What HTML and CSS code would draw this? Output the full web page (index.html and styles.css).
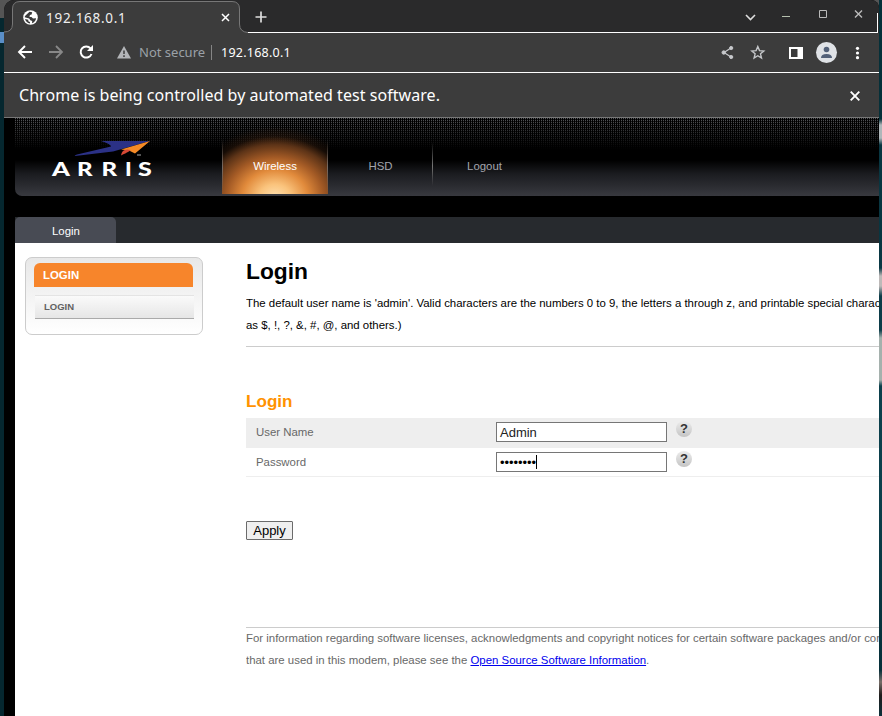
FILE: index.html
```html
<!DOCTYPE html>
<html lang="en">
<head>
<meta charset="utf-8">
<title>192.168.0.1</title>
<link rel="stylesheet" href="styles.css">
</head>
<body>
<div class="window">
  <div class="tabstrip">
    <svg class="tab-shape" width="250" height="33" viewBox="0 0 250 33"><path d="M0 33V32Q8.500 32 8.500 24V9Q8.500 1.500 16 1.500H228Q235.500 1.500 235.500 9V24Q235.500 32 244 32.500V33Z" fill="#3c3c3c"/><path d="M0 32Q8.500 32 8.500 24V9Q8.500 1.500 16 1.500H228Q235.500 1.500 235.500 9V24Q235.500 32 244 32.500" fill="none" stroke="#777"/></svg>
    <div class="tab">
      <svg width="15" height="15" viewBox="0 0 15 15"><circle cx="7.500" cy="7.500" r="7.300" fill="#fff"/><path d="M6.500 1.700L9.200 2.300 8.600 4.400 6.900 5.100 6.500 7H8.500L10 8.500 13.100 8.300Q12.500 12 9 13.200L9.200 11 7.300 10.300 6.200 8.400 1.700 7.300 2 6.100Z" fill="#3c3c3c"/><path d="M2 9L5.300 9.700V11.200L7 12V13.500Q3.200 12.900 2 9Z" fill="#3c3c3c"/></svg>
      <span class="tab-title">192.168.0.1</span>
      <svg class="tab-close" width="9" height="9" viewBox="0 0 9 9"><path d="M1 1L8 8M8 1L1 8" stroke="#fff" stroke-width="1.500"/></svg>
    </div>
    <svg class="plus" width="12" height="12" viewBox="0 0 12 12"><path d="M6 .5V11.500M.5 6H11.500" stroke="#dedede" stroke-width="1.700"/></svg>
    <svg class="controls" width="120" height="16" viewBox="0 0 120 16"><path d="M2 8L6.500 12.500 11 8" fill="none" stroke="#ddd" stroke-width="1.600"/><path d="M38 9.500H46" stroke="#b5c0ae" stroke-width="1.200"/><path d="M75.500 3.500H82.500V10.500H75.500Z" fill="none" stroke="#bbb"/><path d="M111 3.500L118 10.500M118 3.500L111 10.500" stroke="#bbb" stroke-width="1.400"/></svg>
  </div>
  <div class="toolbar">
    <svg class="nav-icons" width="80" height="20" viewBox="0 0 80 20"><path d="M15 10H2.500M8 4L2 10 8 16" fill="none" stroke="#fff" stroke-width="1.900"/><path d="M32 10H45M39 4L45 10 39 16" fill="none" stroke="#888" stroke-width="1.800"/><path d="M74.500 12A5.600 5.600 0 1 1 73.500 6.300" fill="none" stroke="#fff" stroke-width="2"/><path d="M76 3V9H70Z" fill="#fff"/></svg>
    <svg class="warn" width="14" height="13" viewBox="0 0 14 13"><path d="M7 0L14 12.500H0Z" fill="#b3b5b8"/><path d="M7 4.500V8M7 9.300V11" stroke="#3c3c3c" stroke-width="1.500"/></svg>
    <span class="insecure">Not secure</span>
    <span class="url-bar"></span>
    <span class="url">192.168.0.1</span>
    <svg class="actions" width="144" height="24" viewBox="0 0 144 24"><g fill="#c7c9cc" stroke="#c7c9cc"><circle cx="3.700" cy="12.500" r="1.700"/><circle cx="11.200" cy="8" r="1.600"/><circle cx="11.200" cy="17" r="1.600"/><path d="M11 8L4 12.500 11 17" fill="none" stroke-width="1.200"/></g><path d="M37.800 6.600L39.500 10.600 43.800 11 40.500 13.800 41.500 18 37.800 15.700 34.100 18 35.100 13.800 31.800 11 36.100 10.600Z" fill="none" stroke="#c5c7ca" stroke-width="1.400"/><path d="M70 8H82V18H70Z" fill="none" stroke="#fff" stroke-width="2"/><path d="M77.500 7H83V19H77.500Z" fill="#fff"/><circle cx="106.500" cy="12.500" r="10.500" fill="#dfe2e6"/><circle cx="106.500" cy="9.500" r="2.800" fill="#526078"/><path d="M101 18Q101 14 106.500 14T112 18Z" fill="#526078"/><g fill="#fff"><circle cx="137.500" cy="8.300" r="1.600"/><circle cx="137.500" cy="13" r="1.600"/><circle cx="137.500" cy="17.700" r="1.600"/></g></svg>
  </div>
  <div class="infobar">
    <span class="info-text">Chrome is being controlled by automated test software.</span>
    <svg class="info-close" width="10" height="10" viewBox="0 0 10 10"><path d="M.7 .7L9.300 9.300M9.300 .7L.7 9.300" stroke="#fff" stroke-width="1.900"/></svg>
  </div>
  <div class="page">
    <header class="masthead">
      <svg class="logo" width="104" height="42" viewBox="0 0 104 42"><path d="M50 3H99L62 13.500 24 18Q23 17.500 26 16.500L60 8.500Q60 6 50 3Z" fill="#2b3186"/><path d="M99 3L84 15.500 78 12.500 70 11.500Z" fill="#f58a26"/><path d="M70 17.500Q71 9.500 80 12L77 14Q75 15 70 17.500Z" fill="#d84a35"/><path d="M86 17H90" stroke="#aaa"/><g class="wordmark"><text transform="translate(1 37.500) scale(1.380 1)">A</text><text transform="translate(26 37.500) scale(1.300 1)">R</text><text transform="translate(50.500 37.500) scale(1.300 1)">R</text><text transform="translate(74 37.500) scale(1.200 1)">I</text><text transform="translate(87 37.500) scale(1.350 1)">S</text></g></svg>
      <nav class="menu">
        <a class="item active">Wireless</a><a class="item">HSD</a><a class="item last">Logout</a>
      </nav>
    </header>
    <div class="subnav"><a class="subtab">Login</a></div>
    <div class="content">
      <aside class="sidebar">
        <div class="side-head">LOGIN</div>
        <div class="side-item">LOGIN</div>
      </aside>
      <main class="main">
        <h1>Login</h1>
        <p class="intro">The default user name is 'admin'. Valid characters are the numbers 0 to 9, the letters a through z, and printable special charac<br>as $, !, ?, &amp;, #, @, and others.)</p>
        <h2>Login</h2>
        <div class="row shaded"><label class="label">User Name</label><div class="field">Admin</div><span class="help">?</span></div>
        <div class="row"><label class="label">Password</label><div class="field"><span class="dots">••••••••</span><span class="caret"></span></div><span class="help">?</span></div>
        <button class="apply">Apply</button>
        <p class="legal">For information regarding software licenses, acknowledgments and copyright notices for certain software packages and/or cor<br>that are used in this modem, please see the <a class="link">Open Source Software Information</a>.</p>
      </main>
    </div>
  </div>
</div>
<div class="desktop-edge"></div>
</body>
</html>
```
FILE: styles.css
```css
* { box-sizing: border-box; }
body {
  margin: 0;
  width: 882px;
  height: 716px;
  overflow: hidden;
  display: flex;
  padding-left: 4px;
  background: linear-gradient(#555 0 18px, #05272f 18px 32px, #5a8fc8 32px 43px, #05272f 43px);
  font-family: "Liberation Sans", Arial, sans-serif;
  font-size: 11.42px;
}
.window {
  width: 875px;
  height: 716px;
  flex: none;
  overflow: hidden;
  border-radius: 10px 8px 0 0;
  background: #000;
}
.desktop-edge {
  width: 3px;
  height: 716px;
  flex: none;
  background: linear-gradient(#043039 0 119px, #aeb6b9 125px 138px, #083641 145px 240px, #0a3945 268px, #bdb9b8 276px 286px, #0c3d49 296px 330px, #a5b1ad 338px 380px, #0b404c 386px 490px, #062f39 670px, #776d68 682px, #201d1c 695px, #0b303a);
}
.tabstrip {
  height: 33px;
  position: relative;
  background: #2a2a2b;
  display: flex;
  align-items: flex-start;
  background-image: linear-gradient(#fff, #fff), linear-gradient(#fff, #fff);
  background-size: 630px 1px, 1px 20px;
  background-position: 244px 32px, 873px 13px;
  background-repeat: no-repeat;
}
.tab-shape { position: absolute; left: 0; top: 0; }
.tab {
  position: relative;
  width: 236px;
  height: 33px;
  padding: 2px 10px 0 19px;
  display: flex;
  align-items: center;
  flex: none;
}
.tab-title, .insecure, .url, .info-text {
  font-family: "Noto Sans", sans-serif;
  white-space: nowrap;
}
.tab-title { margin-left: 8px; color: #eee; font-size: 13.5px; letter-spacing: .72px; }
.tab-close { margin-left: auto; }
.plus { margin: 11px 0 0 15px; }
.controls { margin: 7px 15px 0 auto; }
.toolbar {
  height: 40px;
  background: #3c3c3c;
  border-bottom: 1px solid #fff;
  padding-bottom: 1px;
  display: flex;
  align-items: center;
}
.nav-icons { margin-left: 13px; }
.warn { margin-left: 20px; }
.insecure { width: 72px; margin-left: 8px; color: #9ba1a7; font-size: 13px; }
.url-bar { width: 1px; height: 15px; background: #858585; }
.url { margin-left: 9px; color: #fff; font-size: 12.5px; letter-spacing: .25px; }
.actions { margin: 0 15px 0 auto; }
.infobar {
  height: 45px;
  background: #3c3c3c;
  border-bottom: 1px solid #777;
  padding: 0 19px 0 15px;
  display: flex;
  align-items: center;
  justify-content: space-between;
  color: #fff;
}
.info-text { font-size: 16px; letter-spacing: .05px; }
.info-close { margin-top: 2px; }
.page { padding-left: 11px; }
.masthead {
  height: 78px;
  display: flex;
  border-radius: 0 0 0 7px;
  background:
    linear-gradient(transparent, #000 31px, transparent 31px),
    repeating-linear-gradient(90deg, transparent 0 1px, #000 1px 2px) 0 0 / 100% 31px no-repeat,
    repeating-linear-gradient(#56575a 0 1px, #151516 1px 2px) 0 0 / 100% 31px no-repeat,
    linear-gradient(#000 42px, #1b1c20 56px, #38393f);
}
.logo { margin: 20px 0 0 36px; flex: none; }
.wordmark { fill: #fff; font: 900 18.500px Lato, sans-serif; }
.menu { display: flex; margin-left: 67px; height: 76px; }
.item {
  width: 105px;
  padding-top: 42px;
  text-align: center;
  color: #a3a5ad;
  background: linear-gradient(transparent 24px, #777 48px, #666 52px, transparent 68px) right / 1px 100% no-repeat;
}
.item.active {
  width: 106px;
  color: #fff;
  background:
    linear-gradient(transparent 20px, #766b64 50px, transparent) left / 1px 100% no-repeat,
    linear-gradient(transparent 20px, #766b64 50px, transparent) right / 1px 100% no-repeat,
    radial-gradient(ellipse 78px 64px at 53px 79px, #ffe0af 0, #fac37c 20%, #e18a3b 42%, #a35a25 62%, #5c3317 82%, rgba(45, 25, 12, .5) 95%, transparent 110%);
}
.item.last { background: none; width: 103px; }
.subnav { height: 26px; margin-top: 21px; background: #272a2e; }
.subtab {
  width: 101px;
  height: 26px;
  display: block;
  padding: 8px 0 0 1px;
  line-height: 13px;
  text-align: center;
  color: #fff;
  background: #484b54;
  border-radius: 5px 5px 0 0;
}
.content { height: 473px; background: #fff; display: flex; padding: 14px 0 0 10px; }
.sidebar {
  width: 178px;
  height: 78px;
  flex: none;
  padding: 5px 8px;
  border: 1px solid #ccc;
  border-radius: 7px;
  background: linear-gradient(#e8e8e8, #fff);
  font-weight: bold;
}
.side-head {
  width: 159px;
  height: 24px;
  padding: 6px 9px;
  line-height: 13px;
  font-size: 11.42px;
  color: #fff;
  background: #f7852b;
  border-radius: 6px 6px 0 0;
}
.side-item {
  height: 24px;
  margin: 8px 0 0 1px;
  padding: 5px 9px;
  line-height: 11px;
  font-size: 9.5px;
  color: #626262;
  border-top: 1px solid #e4e4e4;
  border-bottom: 1px solid #aaa;
  background: linear-gradient(#fafafa, #e6e6e6);
}
.main { margin-left: 43px; width: 633px; flex: none; overflow: hidden; }
h1 { margin: 1px 0 0; font-size: 22.8px; line-height: 27px; color: #000; }
.intro {
  margin: 7px 0 0;
  height: 55px;
  line-height: 22px;
  color: #000;
  white-space: nowrap;
  border-bottom: 1px solid #ccc;
}
h2 { margin: 45px 0 0; font-size: 17.1px; line-height: 20px; color: #ff9200; }
.row {
  height: 29px;
  display: flex;
  align-items: center;
  color: #686868;
  border-bottom: 1px solid #eee;
}
.row.shaded { height: 30px; margin-top: 6px; padding-bottom: 1px; background: #eee; }
.label { width: 250px; padding-left: 10px; }
.field {
  width: 171px;
  height: 20px;
  padding: 0 3px;
  display: flex;
  align-items: center;
  border: 1px solid #767676;
  background: #fff;
  color: #222;
  font-size: 13px;
}
.dots { width: 36px; color: #000; letter-spacing: -.05px; }
.caret { width: 1px; height: 14px; background: #000; }
.help {
  width: 16px;
  height: 16px;
  margin: -7px 0 0 9px;
  border-radius: 50%;
  background: linear-gradient(#ececec, #c4c4c4);
  color: #333;
  font: bold 13px/16px "Liberation Sans", sans-serif;
  text-align: center;
}
.apply {
  display: block;
  width: 47px;
  height: 19px;
  margin-top: 44px;
  padding: 0;
  border: 1px solid #6b6b6b;
  border-radius: 1px;
  background: #efefef;
  color: #000;
  font: 13px/17px "Liberation Sans", sans-serif;
}
.legal {
  margin: 87px 0 0;
  border-top: 1px solid #ccc;
  line-height: 21.8px;
  color: #686868;
  white-space: nowrap;
}
.link { color: #00e; text-decoration: underline; }
```
